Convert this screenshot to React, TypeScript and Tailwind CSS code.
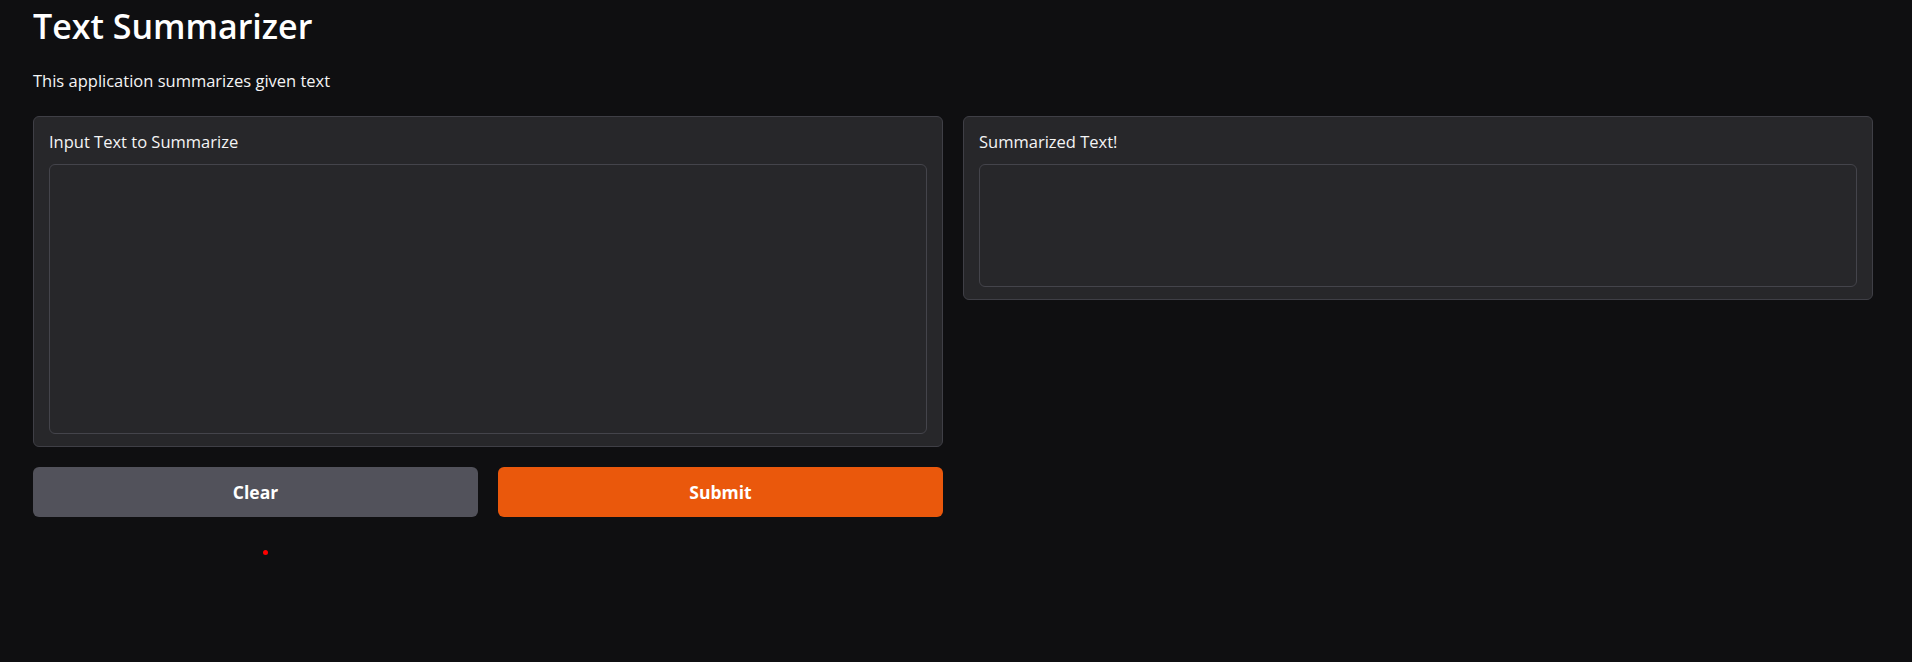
import React from "react";

const font = { fontFamily: '"Open Sans", "Noto Sans", sans-serif' };

function Panel({ label, boxHeight }: { label: string; boxHeight: string }) {
    return (
        <div className="bg-[#27272a] border border-[#3f3f46] rounded-[6px] px-[15px] pt-[13px] pb-[12px]">
            <div className="text-[16.5px] leading-[24px] text-[#f4f4f5] mb-[10px]">{label}</div>
            <div className={`bg-[#27272a] border border-[#44444b] rounded-[6px] ${boxHeight}`}></div>
        </div>
    );
}

export default function App() {
    return (
        <div className="relative min-h-[662px] bg-[#0f0f11] text-white pl-[33px] pr-[39px]" style={font}>
            <h1 className="text-[34px] leading-[52px] font-semibold">Text Summarizer</h1>
            <p className="text-[16.5px] leading-[24px] mt-[17px] text-[#f4f4f5]">This application summarizes given text</p>

            <div className="grid grid-cols-2 gap-[20px] items-start mt-[23px]">
                <div>
                    <Panel label="Input Text to Summarize" boxHeight="h-[270px]" />
                    <div className="grid grid-cols-2 gap-[20px] mt-[20px]">
                        <button className="h-[50px] rounded-[6px] bg-[#52525b] text-white font-bold text-[17.5px]">Clear</button>
                        <button className="h-[50px] rounded-[6px] bg-[#ea580c] text-white font-bold text-[17.5px]">Submit</button>
                    </div>
                </div>
                <Panel label="Summarized Text!" boxHeight="h-[123px]" />
            </div>

            {/* stray red dot */}
            <div className="absolute left-[263px] top-[550px] w-[5px] h-[5px] rounded-full bg-[#ff0000]"></div>
        </div>
    );
}
